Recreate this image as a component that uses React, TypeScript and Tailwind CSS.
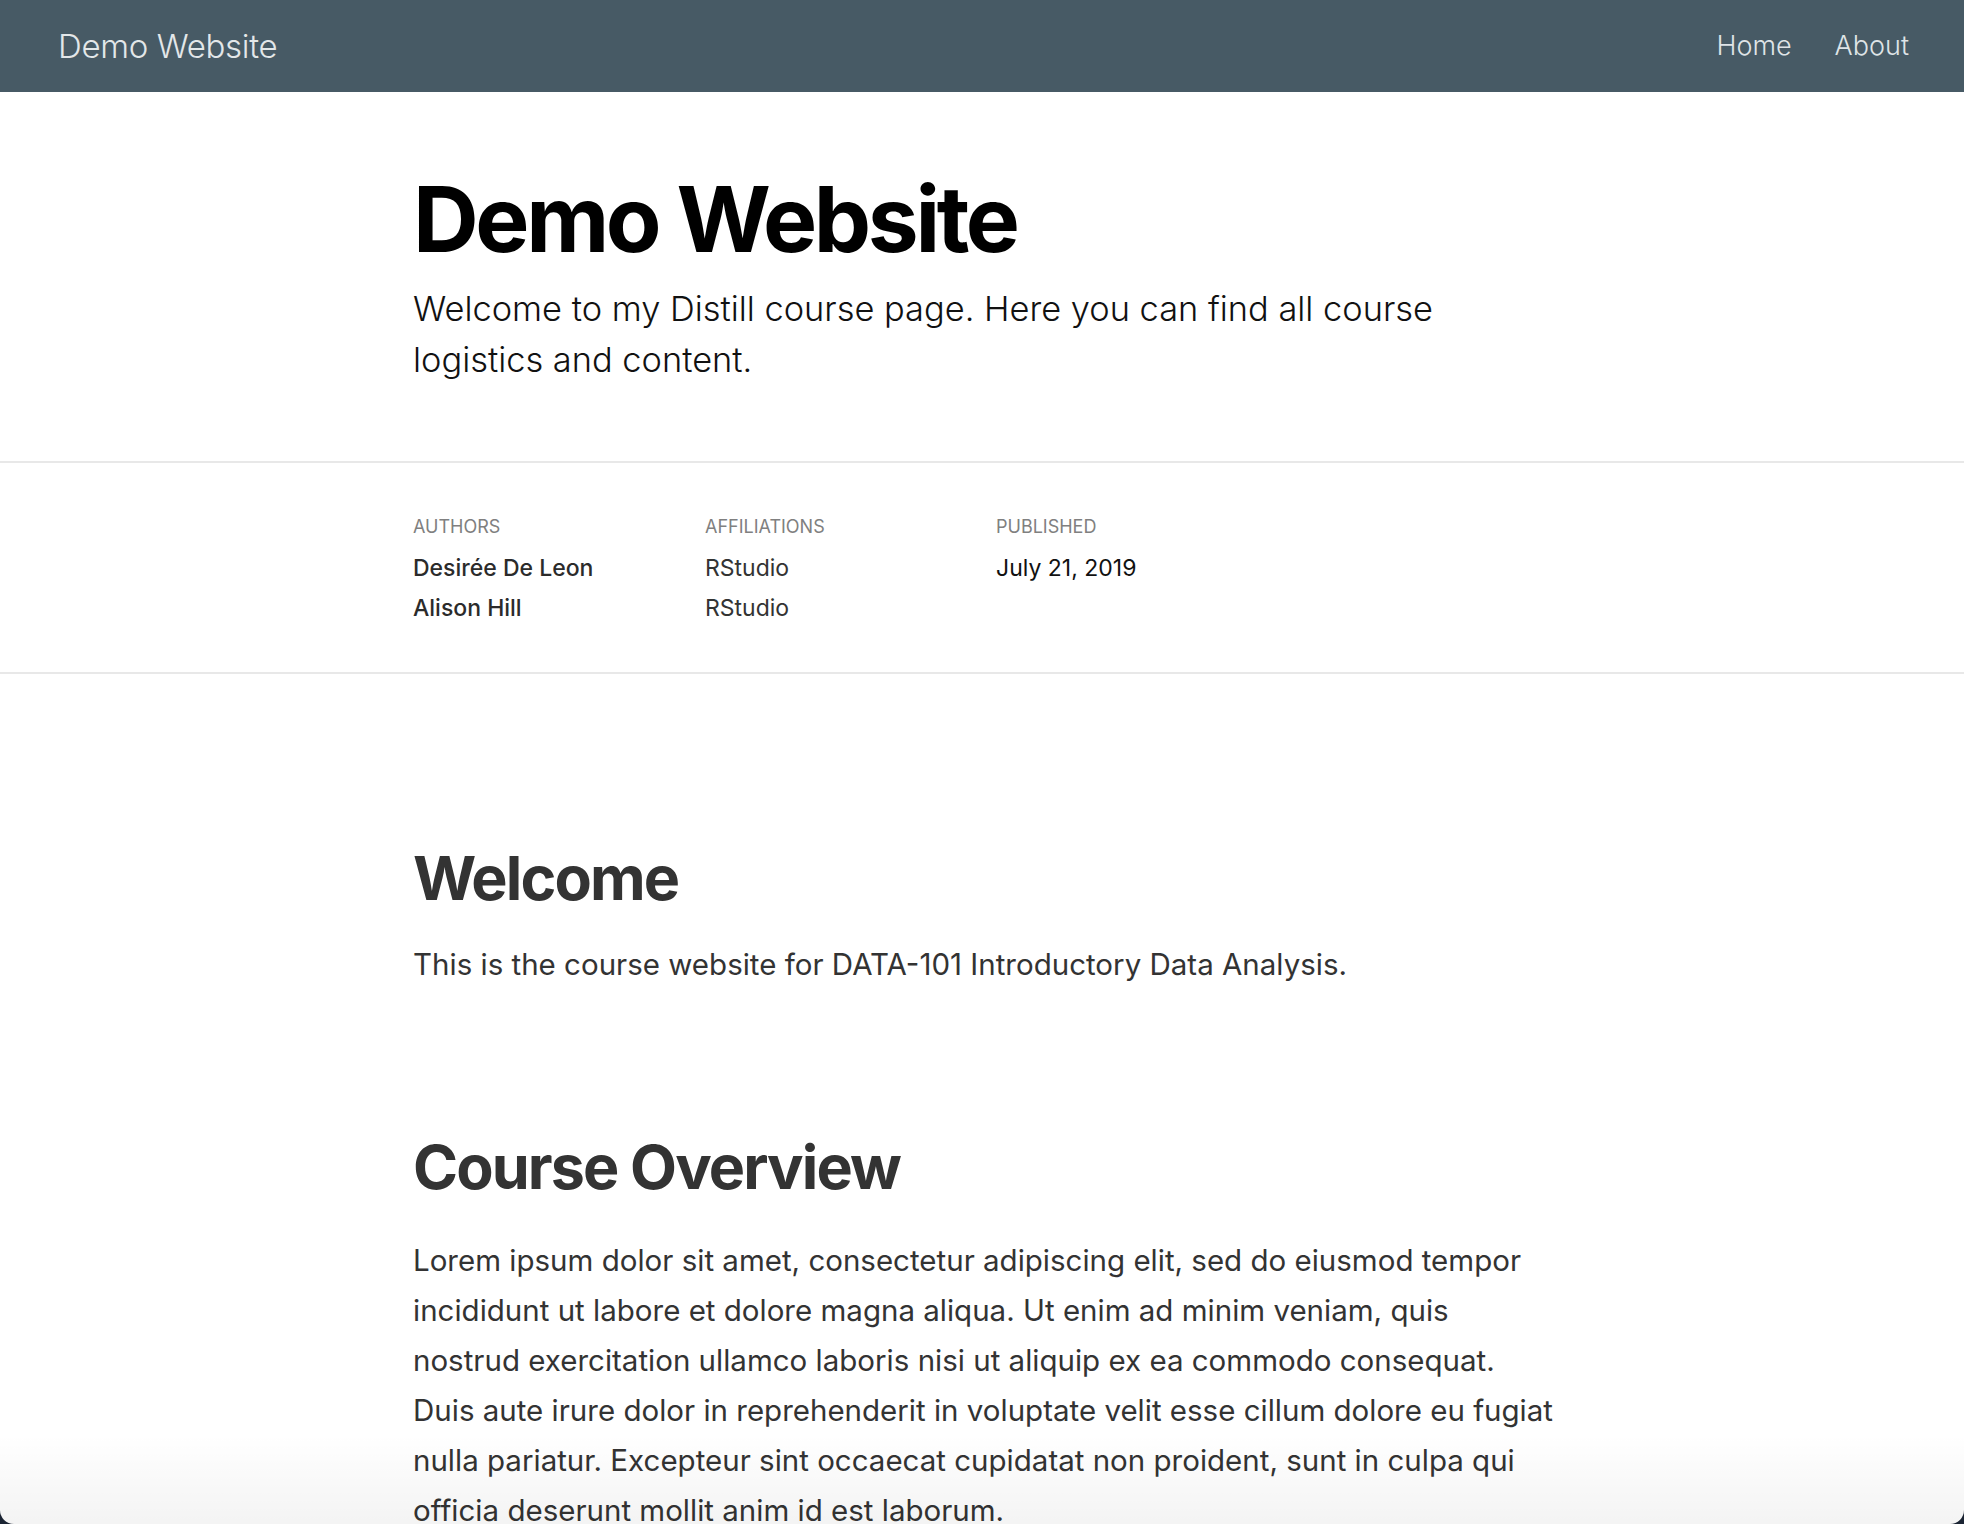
import React from 'react'

const authors = [
  { name: 'Desirée De Leon', affiliation: 'RStudio' },
  { name: 'Alison Hill', affiliation: 'RStudio' },
]

const lorem = [
  'Lorem ipsum dolor sit amet, consectetur adipiscing elit, sed do eiusmod tempor',
  'incididunt ut labore et dolore magna aliqua. Ut enim ad minim veniam, quis',
  'nostrud exercitation ullamco laboris nisi ut aliquip ex ea commodo consequat.',
  'Duis aute irure dolor in reprehenderit in voluptate velit esse cillum dolore eu fugiat',
  'nulla pariatur. Excepteur sint occaecat cupidatat non proident, sunt in culpa qui',
  'officia deserunt mollit anim id est laborum.',
]

function SiteHeader() {
  return (
    <header className="h-[92px] flex items-center justify-between pl-[58px] pr-[55px] bg-[#475a65]">
      <a className="mt-[2px] text-[33px] font-light text-[#e3e7e9] tracking-[-0.01em]">Demo Website</a>
      <nav className="flex items-center gap-[43px] text-[27px] font-light text-[#dfe4e7]">
        <a>Home</a>
        <a>About</a>
      </nav>
    </header>
  )
}

export default function App() {
  return (
    <div className="min-h-[1524px] bg-[#1b2433] font-[Inter,sans-serif]">
      <div className="relative h-[1524px] overflow-hidden rounded-b-[14px] bg-white">
        <SiteHeader />

        {/* title */}
        <div className="border-b-2 border-[#e8e8e8]">
          <div className="mx-auto w-[1138px] pt-[77px] pb-[76px]">
            <h1 className="text-[91px] leading-[1.1] font-bold text-black tracking-[-0.037em]">Demo Website</h1>
            <p className="mt-[14px] text-[34.4px] leading-[51px] font-light text-[#111] whitespace-nowrap">
              Welcome to my Distill course page. Here you can find all course
              <br />
              logistics and content.
            </p>
          </div>
        </div>

        {/* byline */}
        <div className="border-b-2 border-[#e8e8e8]">
          <div className="mx-auto w-[1138px] pt-[50px] pb-[44px] grid grid-cols-[292px_291px_291px_1fr]">
            <div>
              <h3 className="text-[18px] leading-[28px] uppercase text-[#808080]">Authors</h3>
              <div className="mt-[7px] text-[23px] leading-[40px] font-medium text-[#2b2b2b]">
                {authors.map(a => <p key={a.name}>{a.name}</p>)}
              </div>
            </div>
            <div>
              <h3 className="text-[18px] leading-[28px] uppercase text-[#808080]">Affiliations</h3>
              <div className="mt-[7px] text-[23px] leading-[40px] text-[#333]">
                {authors.map(a => <p key={a.name}>{a.affiliation}</p>)}
              </div>
            </div>
            <div>
              <h3 className="text-[18px] leading-[28px] uppercase text-[#808080]">Published</h3>
              <div className="mt-[7px] text-[23px] leading-[40px] text-[#111]">
                <p>July 21, 2019</p>
              </div>
            </div>
          </div>
        </div>

        {/* article */}
        <div className="mx-auto w-[1138px] text-[#333]">
          <h2 className="mt-[166px] text-[61px] leading-[1.25] font-bold tracking-[-0.031em]">Welcome</h2>
          <p className="mt-[23px] text-[29.5px] leading-[50px]">
            This is the course website for DATA-101 Introductory Data Analysis.
          </p>

          <h2 className="mt-[140px] text-[61px] leading-[1.25] font-bold tracking-[-0.031em]">Course Overview</h2>
          <p className="mt-[29px] text-[29.5px] leading-[50px] whitespace-nowrap">
            {lorem.map((line, i) => (
              <React.Fragment key={i}>
                {line}
                {i < lorem.length - 1 && <br />}
              </React.Fragment>
            ))}
          </p>
        </div>

        {/* window bottom shade */}
        <div className="pointer-events-none absolute inset-x-0 bottom-0 h-[90px] bg-gradient-to-b from-black/0 to-black/[0.045]" />
      </div>
    </div>
  )
}
